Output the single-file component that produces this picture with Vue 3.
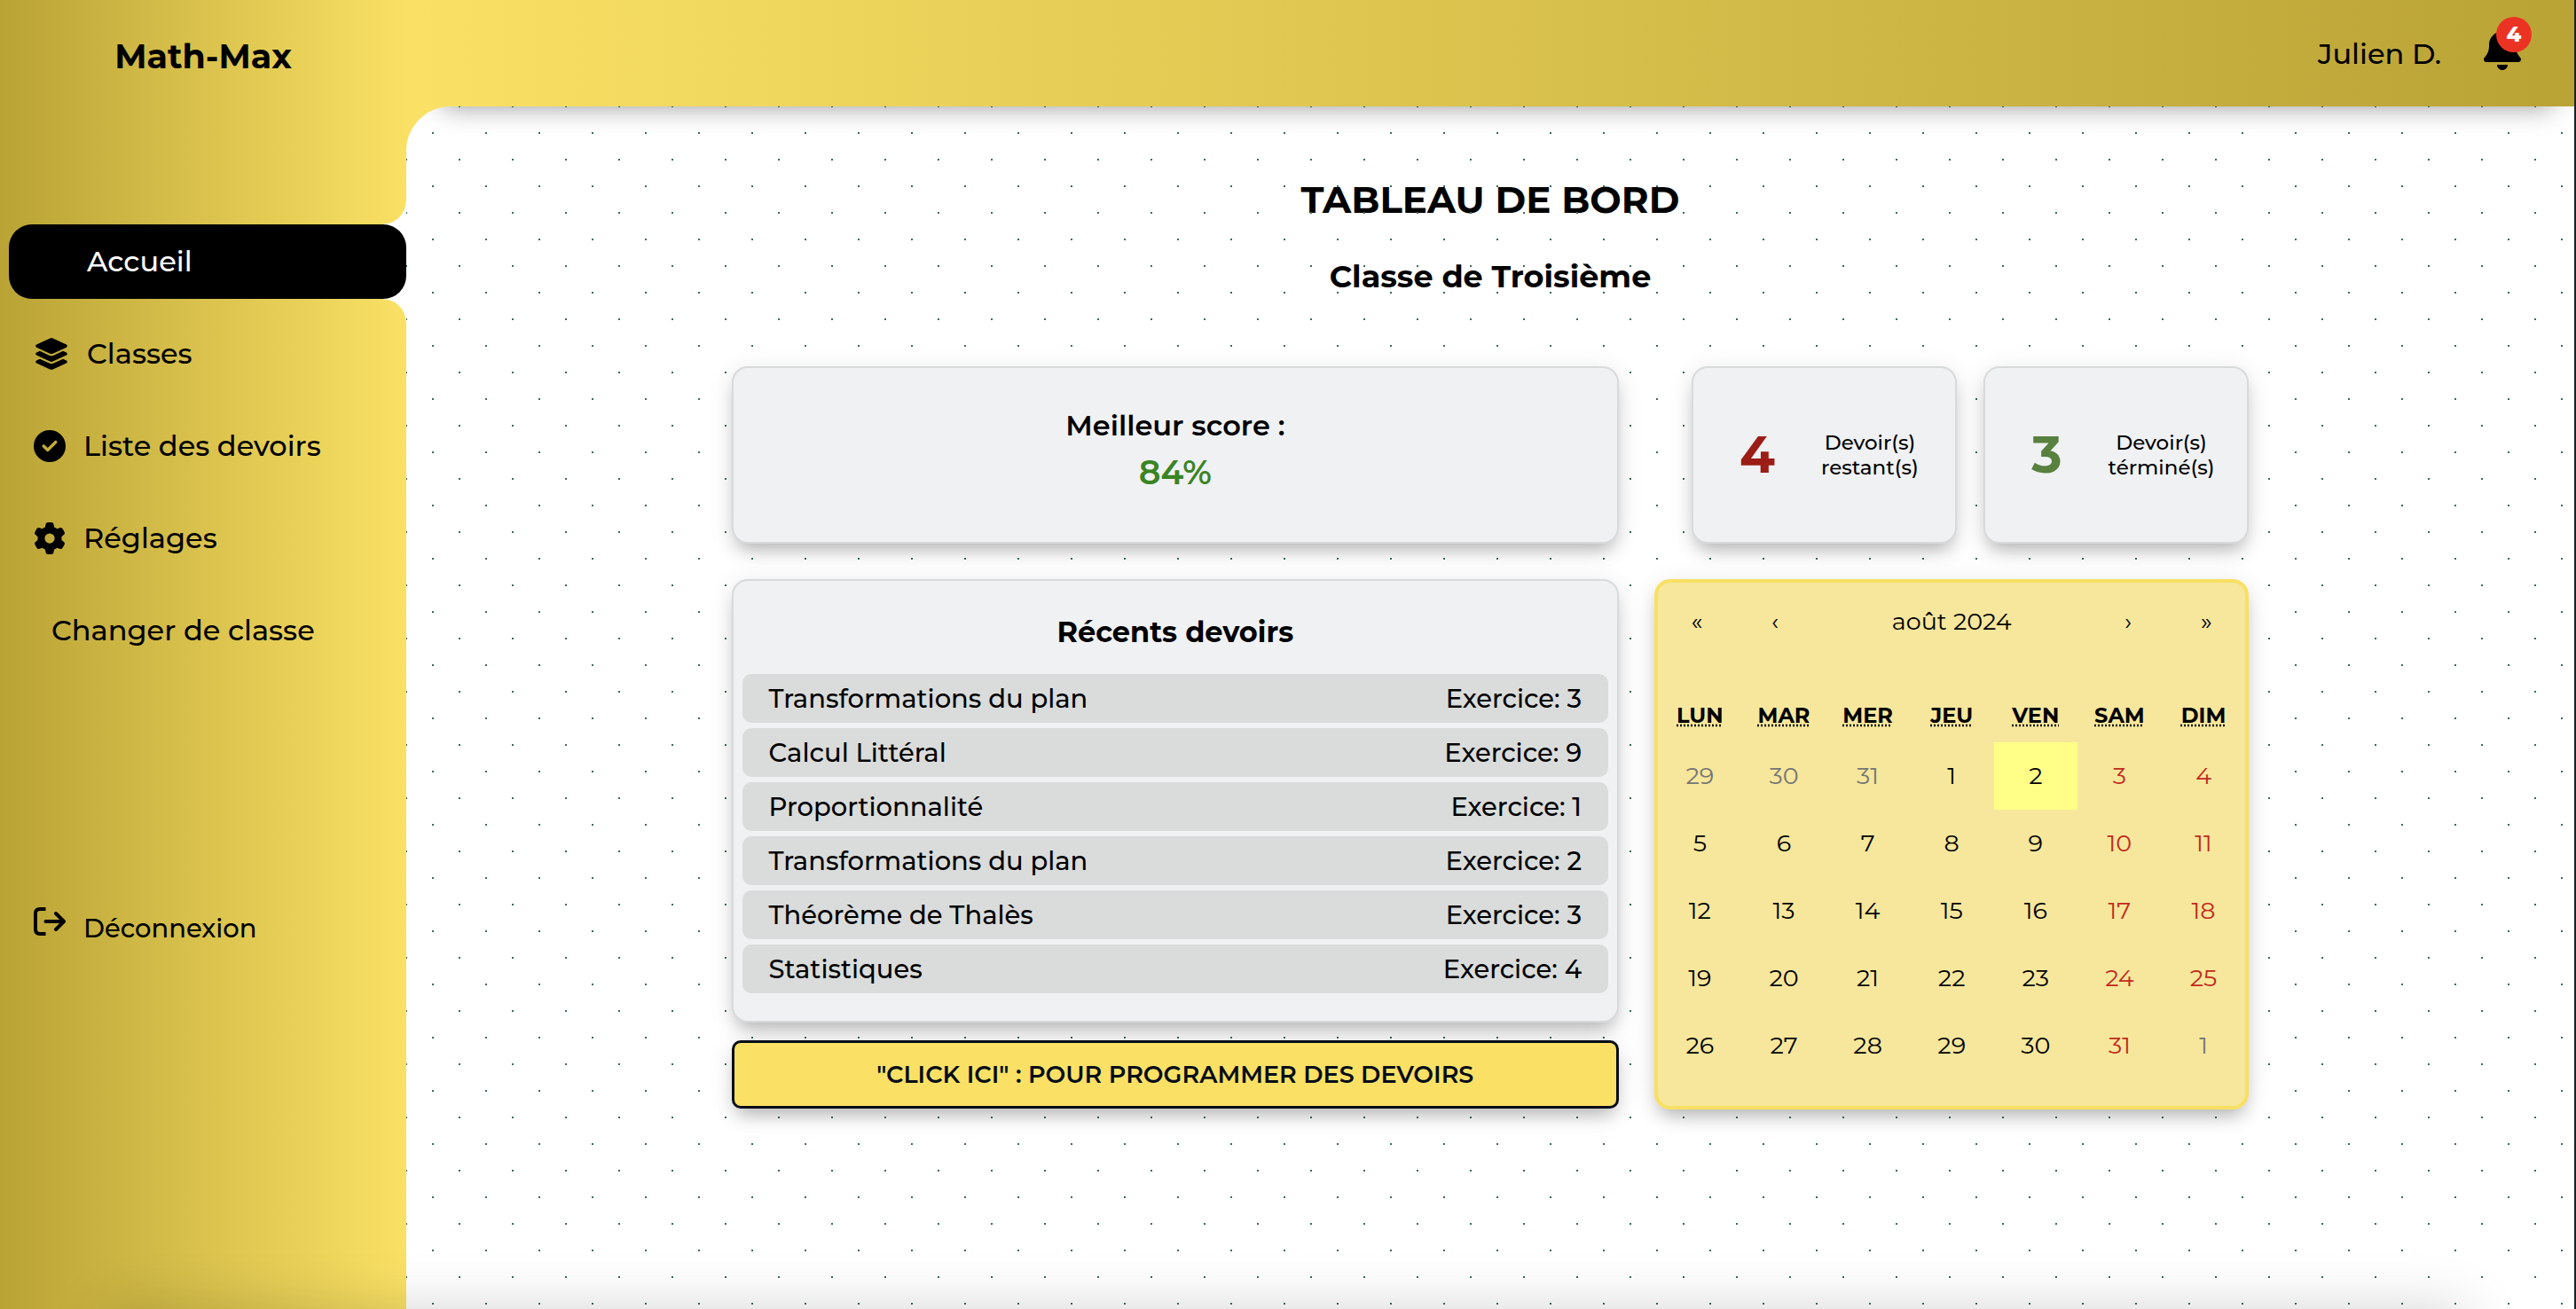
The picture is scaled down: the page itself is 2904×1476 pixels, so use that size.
<script setup>
const menu = [
  { label: 'Accueil', icon: null, active: true, wide: true },
  { label: 'Classes', icon: 'layers', wide: true },
  { label: 'Liste des devoirs', icon: 'check' },
  { label: 'Réglages', icon: 'gear' },
  { label: 'Changer de classe', icon: null, plain: true },
]

const homework = [
  { name: 'Transformations du plan', exercise: 3 },
  { name: 'Calcul Littéral', exercise: 9 },
  { name: 'Proportionnalité', exercise: 1 },
  { name: 'Transformations du plan', exercise: 2 },
  { name: 'Théorème de Thalès', exercise: 3 },
  { name: 'Statistiques', exercise: 4 },
]

const weekdays = [
  ['lun', 'lundi'],
  ['mar', 'mardi'],
  ['mer', 'mercredi'],
  ['jeu', 'jeudi'],
  ['ven', 'vendredi'],
  ['sam', 'samedi'],
  ['dim', 'dimanche'],
]

// Five weeks starting on Monday 29 July 2024
const weeks = Array.from({ length: 5 }, (_, w) =>
  Array.from({ length: 7 }, (_, d) => {
    const date = new Date(2024, 6, 29 + w * 7 + d)
    const outside = date.getMonth() !== 7
    return {
      day: date.getDate(),
      outside,
      weekend: d > 4 && !outside,
      today: !outside && date.getDate() === 2,
    }
  })
)
</script>

<template>
  <div class="page">
    <aside class="sidebar">
      <div class="logo">Math-Max</div>
      <nav>
        <ul class="menu">
          <li v-for="item in menu" :key="item.label" :class="{ active: item.active }">
            <a href="#" :class="['link', { wide: item.wide, plain: item.plain }]">
              <span v-if="!item.plain" class="icon">
                <svg v-if="item.icon === 'layers'" viewBox="0 0 576 512" width="40" height="36" aria-hidden="true">
                  <path d="M264.500 5.200c14.900-6.900 32.100-6.900 47 0l218.600 101c8.500 3.900 13.900 12.400 13.900 21.800s-5.400 17.900-13.900 21.800l-218.600 101c-14.900 6.900-32.100 6.900-47 0L45.900 149.800C37.400 145.800 32 137.300 32 128s5.400-17.900 13.900-21.800L264.500 5.200zM476.900 209.600l53.200 24.600c8.500 3.900 13.900 12.400 13.900 21.800s-5.400 17.900-13.900 21.800l-218.600 101c-14.900 6.900-32.100 6.900-47 0L45.900 277.800C37.400 273.800 32 265.300 32 256s5.400-17.900 13.900-21.800l53.200-24.600 152 70.200c23.400 10.800 50.400 10.800 73.800 0l152-70.200zm-152 198.200l152-70.200 53.200 24.600c8.500 3.900 13.900 12.400 13.900 21.800s-5.400 17.900-13.900 21.800l-218.600 101c-14.900 6.900-32.100 6.900-47 0L45.900 405.800C37.400 401.800 32 393.300 32 384s5.400-17.900 13.900-21.800l53.200-24.600 152 70.200c23.400 10.800 50.400 10.800 73.800 0z" />
                </svg>
                <svg v-else-if="item.icon === 'check'" viewBox="0 0 512 512" width="36" height="36" aria-hidden="true">
                  <path d="M256 512A256 256 0 1 0 256 0a256 256 0 1 0 0 512zM369 209L241 337c-9.400 9.400-24.600 9.400-33.900 0l-64-64c-9.400-9.400-9.400-24.600 0-33.900s24.600-9.400 33.900 0l47 47L335 175c9.400-9.400 24.600-9.400 33.900 0s9.400 24.600 0 33.900z" />
                </svg>
                <svg v-else-if="item.icon === 'gear'" viewBox="0 0 512 512" width="36" height="36" aria-hidden="true">
                  <path d="M495.900 166.600c3.200 8.700 .5 18.400-6.400 24.600l-43.300 39.400c1.100 8.300 1.700 16.800 1.700 25.400s-.6 17.100-1.700 25.400l43.300 39.400c6.900 6.200 9.600 15.900 6.400 24.600c-4.400 11.900-9.700 23.300-15.800 34.300l-4.700 8.100c-6.600 11-14 21.400-22.100 31.200c-5.900 7.200-15.700 9.600-24.500 6.800l-55.700-17.700c-13.400 10.300-28.200 18.900-44 25.400l-12.500 57.100c-2 9.100-9 16.300-18.200 17.800c-13.800 2.300-28 3.500-42.500 3.500s-28.700-1.200-42.500-3.500c-9.200-1.500-16.200-8.700-18.200-17.800l-12.500-57.100c-15.800-6.500-30.600-15.100-44-25.400L83.100 425.900c-8.800 2.800-18.600 .3-24.500-6.800c-8.100-9.800-15.500-20.200-22.100-31.200l-4.700-8.100c-6.100-11-11.400-22.400-15.800-34.300c-3.200-8.700-.5-18.400 6.400-24.600l43.300-39.400C64.600 273.100 64 264.600 64 256s.6-17.100 1.700-25.400L22.400 191.200c-6.900-6.200-9.600-15.900-6.400-24.600c4.400-11.900 9.700-23.300 15.800-34.300l4.700-8.100c6.600-11 14-21.400 22.100-31.200c5.900-7.200 15.700-9.600 24.500-6.800l55.700 17.700c13.400-10.300 28.200-18.900 44-25.400l12.500-57.100c2-9.100 9-16.300 18.200-17.800C227.300 1.200 241.500 0 256 0s28.700 1.200 42.500 3.500c9.200 1.500 16.200 8.700 18.200 17.800l12.500 57.100c15.800 6.500 30.600 15.100 44 25.400l55.700-17.700c8.800-2.800 18.600-.3 24.500 6.800c8.100 9.800 15.500 20.200 22.100 31.200l4.700 8.100c6.100 11 11.400 22.400 15.800 34.300zM256 336a80 80 0 1 0 0-160 80 80 0 1 0 0 160z" />
                </svg>
              </span>
              {{ item.label }}
            </a>
          </li>
        </ul>
      </nav>
      <a href="#" class="logout">
        <svg class="icon" viewBox="0 0 36 36" width="36" height="36" aria-hidden="true">
          <g fill="none" stroke="#000" stroke-width="4" stroke-linejoin="round">
            <path d="M13.500 4H7Q2 4 2 9V27Q2 32 7 32H13.500" />
            <path d="M13.500 18H33M25 9L34 18L25 27" stroke-linecap="round" />
          </g>
        </svg>
        Déconnexion
      </a>
    </aside>

    <div class="content">
      <header class="topbar">
        <span>Julien D.</span>
        <button class="bell" type="button" aria-label="Notifications">
          <svg viewBox="0 0 448 512" width="42" height="48" aria-hidden="true">
            <path d="M224 0c-17.700 0-32 14.300-32 32V51.200C119 66 64 130.600 64 208v18.800c0 47-17.300 92.400-48.500 127.600l-7.400 8.300c-8.400 9.400-10.400 22.900-5.300 34.400S19.400 416 32 416H416c12.600 0 24-7.400 29.200-18.900s3.100-25-5.300-34.400l-7.400-8.300C401.300 319.200 384 273.900 384 226.800V208c0-77.400-55-142-128-156.800V32c0-17.700-14.300-32-32-32zm45.300 493.300c12-12 18.700-28.300 18.700-45.300H160c0 17 6.700 33.300 18.700 45.300s28.300 18.700 45.300 18.700s33.300-6.700 45.300-18.700z" />
          </svg>
          <span class="badge">4</span>
        </button>
      </header>

      <main class="board">
        <h1>TABLEAU DE BORD</h1>
        <h2>Classe de Troisième</h2>

        <div class="grid">
          <section class="card score">
            <p>Meilleur score :</p>
            <strong>84%</strong>
          </section>

          <div class="counts">
            <section class="card count left">
              <strong>4</strong>
              <p>Devoir(s)<br />restant(s)</p>
            </section>
            <section class="card count done">
              <strong>3</strong>
              <p>Devoir(s)<br />términé(s)</p>
            </section>
          </div>

          <div class="recent-column">
            <section class="card recent">
              <h3>Récents devoirs</h3>
              <ul>
                <li v-for="(row, i) in homework" :key="i">
                  <span>{{ row.name }}</span>
                  <span>Exercice: {{ row.exercise }}</span>
                </li>
              </ul>
            </section>
            <button class="plan" type="button">"CLICK ICI" : POUR PROGRAMMER DES DEVOIRS</button>
          </div>

          <section class="calendar">
            <div class="calendar-nav">
              <button type="button" aria-label="Année précédente">«</button>
              <button type="button" aria-label="Mois précédent">‹</button>
              <button type="button" class="month">août 2024</button>
              <button type="button" aria-label="Mois suivant">›</button>
              <button type="button" aria-label="Année suivante">»</button>
            </div>
            <table>
              <thead>
                <tr>
                  <th v-for="[short, full] in weekdays" :key="short" scope="col">
                    <abbr :title="full">{{ short.toUpperCase() }}</abbr>
                  </th>
                </tr>
              </thead>
              <tbody>
                <tr v-for="(week, w) in weeks" :key="w">
                  <td v-for="(date, d) in week" :key="d">
                    <button
                      type="button"
                      :class="['day', { outside: date.outside, weekend: date.weekend, today: date.today }]"
                    >{{ date.day }}</button>
                  </td>
                </tr>
              </tbody>
            </table>
          </section>
        </div>
      </main>
    </div>
    <div class="edge-shade"></div>
  </div>
</template>

<style>
body {
  margin: 0;
}
</style>

<style scoped>
.page {
  --gold: #fae165;
  --gold-dark: #b9a335;
  box-sizing: border-box;
  position: relative;
  display: flex;
  min-height: 100vh;
  overflow: hidden;
  border-right: 2px solid #1b2226;
  background: #fff;
  color: #000;
  font: 500 32px/38px Montserrat, Inter, sans-serif;
}

h1,
h2,
h3,
p,
ul {
  margin: 0;
  padding: 0;
}

ul {
  list-style: none;
}

a {
  color: inherit;
  text-decoration: none;
}

button {
  margin: 0;
  padding: 0;
  border: 0;
  background: none;
  color: inherit;
  font: inherit;
  cursor: pointer;
}

svg {
  display: block;
}

/* Sidebar */
.sidebar {
  flex: none;
  width: 458px;
  background: linear-gradient(90deg, var(--gold-dark), var(--gold));
}

.logo {
  margin-bottom: 125px;
  font-size: 38px;
  font-weight: 700;
  line-height: 128px;
  text-align: center;
}

.menu {
  display: flex;
  flex-direction: column;
  gap: 20px;
}

.menu li {
  position: relative;
  padding-left: 10px;
}

.link {
  display: flex;
  align-items: center;
  height: 84px;
  padding-left: 28px;
}

.icon {
  flex: none;
  width: 56px;
}

.wide .icon {
  width: 60px;
}

.link.plain {
  padding-left: 48px;
}

.active {
  background: linear-gradient(#fff, #fff) right / 26px 100% no-repeat;
}

.active .link {
  border-radius: 26px;
  background: #000;
  color: #fff;
}

.active::before,
.active::after {
  content: '';
  position: absolute;
  right: 0;
  width: 26px;
  height: 26px;
}

.active::before {
  bottom: 100%;
  background: radial-gradient(circle at 0 0, transparent 25px, #fff 26px);
}

.active::after {
  top: 100%;
  background: radial-gradient(circle at 0 100%, transparent 25px, #fff 26px);
}

.logout {
  display: flex;
  align-items: baseline;
  margin-top: 268px;
  padding-left: 38px;
  font-size: 29px;
}

.logout .icon {
  width: 36px;
  margin-right: 20px;
}

/* Top bar */
.content {
  flex: 1;
  display: flex;
  flex-direction: column;
  background: var(--gold);
}

.topbar {
  box-sizing: border-box;
  display: flex;
  align-items: center;
  justify-content: flex-end;
  gap: 48px;
  height: 120px;
  padding: 2px 60px 0 0;
  background: linear-gradient(90deg, var(--gold), var(--gold-dark));
}

.bell {
  position: relative;
  margin-bottom: 12px;
}

.badge {
  position: absolute;
  top: -12px;
  right: -12px;
  width: 40px;
  height: 40px;
  border-radius: 50%;
  background: #eb3323;
  color: #fff;
  font-size: 24px;
  font-weight: 800;
  line-height: 40px;
}

/* Board */
.board {
  position: relative;
  flex: 1;
  padding: 79px 0 120px;
  overflow: hidden;
  border-top-left-radius: 50px;
  background: #fff;
}

.board::before {
  content: '';
  position: absolute;
  inset: 0;
  background:
    radial-gradient(#3d6b57 1px, transparent 1px) 0 0 / 60px 60px,
    radial-gradient(#3d6b57 1px, transparent 1px) 30px 30px / 60px 60px;
}

.board::after {
  content: '';
  position: absolute;
  top: -60px;
  left: 40px;
  right: 24px;
  height: 60px;
  box-shadow: 0 0 30px rgba(0, 0, 0, 0.42);
}

h1,
h2 {
  font-weight: 700;
  text-align: center;
}

h1 {
  margin-bottom: 39px;
  font-size: 42px;
  line-height: 52px;
}

h2 {
  margin-bottom: 79px;
  font-size: 35px;
  line-height: 44px;
}

.grid {
  position: relative;
  z-index: 1;
  display: grid;
  grid-template-columns: 1000fr 670fr;
  gap: 40px;
  width: 70%;
  margin: 0 auto;
}

.card {
  box-sizing: border-box;
  border: 2px solid #d8dadb;
  border-radius: 18px;
  background: #f0f1f3;
}

.card,
.plan,
.calendar {
  box-shadow: 0 12px 20px -6px rgba(0, 0, 0, 0.26), 0 4px 30px rgba(0, 0, 0, 0.09);
}

.score {
  display: flex;
  flex-direction: column;
  align-items: center;
  justify-content: center;
  gap: 12px;
  height: 200px;
  padding-bottom: 10px;
  font-weight: 600;
}

.score strong {
  color: #3a8423;
  font-size: 38px;
  font-weight: 600;
  line-height: 44px;
}

.counts {
  display: grid;
  grid-template-columns: 1fr 1fr;
  gap: 30px;
  padding-left: 42px;
}

.count {
  display: flex;
  align-items: center;
  gap: 52px;
  padding-left: 52px;
  font-size: 23px;
  line-height: 28px;
  text-align: center;
}

.count strong {
  font-size: 58px;
  font-weight: 700;
}

.left strong {
  color: #9b1d15;
}

.done strong {
  color: #58803f;
}

.recent-column {
  display: flex;
  flex-direction: column;
  gap: 20px;
}

.recent {
  padding: 37px 10px 31px;
}

.recent h3 {
  margin-bottom: 26px;
  font-size: 32px;
  font-weight: 700;
  line-height: 42px;
  text-align: center;
}

.recent ul {
  display: flex;
  flex-direction: column;
  gap: 6px;
}

.recent li {
  display: flex;
  justify-content: space-between;
  padding: 0 30px;
  border-radius: 10px;
  background: #dadcdb;
  font-size: 29px;
  line-height: 55px;
}

.plan {
  box-sizing: border-box;
  height: 77px;
  border: 3px solid #070d18;
  border-radius: 10px;
  background: var(--gold);
  color: #070d18;
  font-size: 27px;
  font-weight: 600;
}

/* Calendar */
.calendar {
  box-sizing: border-box;
  padding-bottom: 30px;
  border: 4px solid #f9e064;
  border-radius: 18px;
  background: #f6e79c;
  font-size: 27px;
  font-weight: 400;
}

.calendar-nav {
  display: flex;
  height: 88px;
  margin-bottom: 32px;
}

.calendar-nav button {
  width: 88px;
}

.calendar-nav .month {
  flex: 1;
}

table {
  width: 100%;
  border-collapse: collapse;
  table-layout: fixed;
}

th,
td {
  padding: 0;
}

th {
  height: 60px;
  font-size: 24px;
  font-weight: 700;
}

abbr {
  text-decoration: underline dotted;
}

.day {
  display: block;
  width: 100%;
  height: 76px;
}

.weekend {
  color: #c22a1d;
}

.outside {
  color: #757575;
}

.today {
  background: #ffff87;
}

.edge-shade {
  position: absolute;
  z-index: 2;
  bottom: -100px;
  left: 120px;
  right: 120px;
  height: 100px;
  box-shadow: 0 0 64px rgba(0, 0, 0, 0.17);
  pointer-events: none;
}
</style>
